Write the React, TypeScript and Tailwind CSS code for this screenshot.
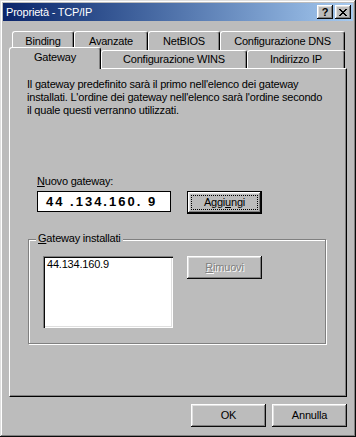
import React from "react";

const raised =
  "shadow-[inset_-1px_-1px_#0a0a0a,inset_1px_1px_#ffffff,inset_-2px_-2px_#808080,inset_2px_2px_#dfdfdf]";
const sunken =
  "shadow-[inset_1px_1px_#808080,inset_2px_2px_#0a0a0a,inset_-1px_-1px_#ffffff,inset_-2px_-2px_#dfdfdf]";

function Tab({ label, width, selected }: { label: string; width: string; selected?: boolean }) {
  return (
    <div
      className={`${width} ${
        selected ? "h-[22px] -mb-px relative z-10" : "h-full"
      } flex items-center justify-center bg-[#bcbcbc] border border-b-0 border-t-white border-l-white border-r-black rounded-t-[3px] shadow-[inset_-1px_0_#808080]`}
    >
      <span className={selected ? "-mt-[2px]" : ""}>{label}</span>
    </div>
  );
}

function Button({ children, className = "" }: { children: React.ReactNode; className?: string }) {
  return (
    <div
      className={`w-[75px] h-[23px] flex items-center justify-center bg-[#bcbcbc] ${raised} ${className}`}
    >
      {children}
    </div>
  );
}

export default function App() {
  return (
    <div
      className="w-[356px] h-[437px] bg-[#bcbcbc] p-[3px] flex flex-col text-[11px] leading-[13px] tracking-[-0.2px] text-black shadow-[inset_-1px_-1px_#0a0a0a,inset_1px_1px_#dfdfdf,inset_-2px_-2px_#808080,inset_2px_2px_#ffffff]"
      style={{ fontFamily: '"Liberation Sans", Arial, sans-serif' }}
    >
      {/* title bar */}
      <div className="h-[18px] flex items-center justify-between pl-[3px] pr-[2px] bg-linear-to-r from-[#0a246a] to-[#a6caf0]">
        <span className="text-white">Proprietà - TCP/IP</span>
        <div className="flex gap-[2px]">
          <div className={`w-[16px] h-[14px] bg-[#bcbcbc] flex items-center justify-center font-bold text-[11px] leading-none ${raised}`}>
            ?
          </div>
          <div className={`w-[16px] h-[14px] bg-[#bcbcbc] flex items-center justify-center ${raised}`}>
            <svg width="8" height="7" viewBox="0 0 8 7" shapeRendering="crispEdges">
              <path
                d="M0 0h2v1h-2zM6 0h2v1h-2zM1 1h2v1h-2zM5 1h2v1h-2zM2 2h4v1h-4zM3 3h2v1h-2zM2 4h4v1h-4zM1 5h2v1h-2zM5 5h2v1h-2zM0 6h2v1h-2zM6 6h2v1h-2z"
                fill="#000"
              />
            </svg>
          </div>
        </div>
      </div>

      {/* tabs */}
      <div className="mt-[10px] h-[19px] flex pl-[9px]">
        <Tab label="Binding" width="w-[62px]" />
        <Tab label="Avanzate" width="w-[74px]" />
        <Tab label="NetBIOS" width="w-[72px]" />
        <Tab label="Configurazione DNS" width="w-[125px]" />
      </div>
      <div className="h-[18px] flex items-end pl-[6px]">
        <Tab label="Gateway" width="w-[92px]" selected />
        <Tab label="Configurazione WINS" width="w-[146px]" />
        <Tab label="Indirizzo IP" width="w-[98px]" />
      </div>

      {/* panel */}
      <div className="ml-[6px] w-[338px] h-[329px] border border-t-white border-l-white border-r-black border-b-black shadow-[inset_-1px_-1px_#808080] flex flex-col">
        <p className="mt-[9px] pl-[17px]">
          Il gateway predefinito sarà il primo nell'elenco dei gateway
          <br />
          installati. L'ordine dei gateway nell'elenco sarà l'ordine secondo
          <br />
          il quale questi verranno utilizzati.
        </p>

        <div className="mt-[58px] pl-[27px]">
          <span className="underline">N</span>uovo gateway:
        </div>
        <div className="mt-[3px] pl-[27px] flex gap-[16px] items-start">
          <div className="w-[134px] h-[21px] bg-white border border-black flex items-center pl-[8px] font-bold text-[13px] tracking-[2px]">
            <span className="whitespace-pre">44 .134.160. 9</span>
          </div>
          <div className="w-[75px] h-[23px] border border-black">
            <div className={`w-full h-full p-[3px] bg-[#bcbcbc] ${raised}`}>
              <div className="w-full h-full border border-dotted border-black flex items-center justify-center">
                <span>
                  Aggi<span className="underline">u</span>ngi
                </span>
              </div>
            </div>
          </div>
        </div>

        <div className="mt-[25px] ml-[18px] w-[298px] h-[105px] relative border border-[#808080] shadow-[inset_1px_1px_#ffffff,1px_1px_#ffffff]">
          <div className="absolute -top-[8px] left-[7px] px-[2px] bg-[#bcbcbc] h-[13px]">
            <span className="underline">G</span>ateway installati
          </div>
          <div className="mt-[16px] ml-[14px] flex gap-[14px] items-start">
            <div className={`w-[130px] h-[72px] bg-white pl-[4px] pt-[2px] ${sunken}`}>44.134.160.9</div>
            <Button className="text-[#808080] [text-shadow:1px_1px_0_#ffffff]">
              <span>
                <span className="underline">R</span>imuovi
              </span>
            </Button>
          </div>
        </div>
      </div>

      {/* footer buttons */}
      <div className="mt-[7px] flex justify-end gap-[6px] pr-[6px]">
        <Button>OK</Button>
        <Button>Annulla</Button>
      </div>
    </div>
  );
}
